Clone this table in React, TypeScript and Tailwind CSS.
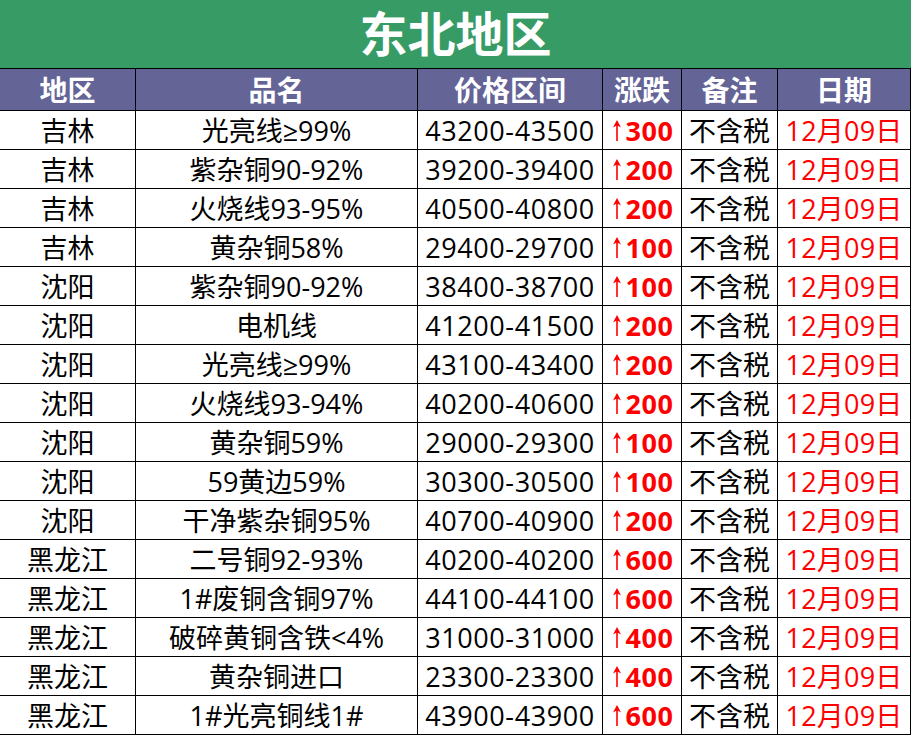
import React from 'react';

interface PriceRow {
  region: string;
  name: string;
  range: string;
  change: string;
}

const rows: PriceRow[] = [
  { region: '吉林', name: '光亮线≥99%', range: '43200-43500', change: '300' },
  { region: '吉林', name: '紫杂铜90-92%', range: '39200-39400', change: '200' },
  { region: '吉林', name: '火烧线93-95%', range: '40500-40800', change: '200' },
  { region: '吉林', name: '黄杂铜58%', range: '29400-29700', change: '100' },
  { region: '沈阳', name: '紫杂铜90-92%', range: '38400-38700', change: '100' },
  { region: '沈阳', name: '电机线', range: '41200-41500', change: '200' },
  { region: '沈阳', name: '光亮线≥99%', range: '43100-43400', change: '200' },
  { region: '沈阳', name: '火烧线93-94%', range: '40200-40600', change: '200' },
  { region: '沈阳', name: '黄杂铜59%', range: '29000-29300', change: '100' },
  { region: '沈阳', name: '59黄边59%', range: '30300-30500', change: '100' },
  { region: '沈阳', name: '干净紫杂铜95%', range: '40700-40900', change: '200' },
  { region: '黑龙江', name: '二号铜92-93%', range: '40200-40200', change: '600' },
  { region: '黑龙江', name: '1#废铜含铜97%', range: '44100-44100', change: '600' },
  { region: '黑龙江', name: '破碎黄铜含铁<4%', range: '31000-31000', change: '400' },
  { region: '黑龙江', name: '黄杂铜进口', range: '23300-23300', change: '400' },
  { region: '黑龙江', name: '1#光亮铜线1#', range: '43900-43900', change: '600' },
];

const headers = ['地区', '品名', '价格区间', '涨跌', '备注', '日期'];

// Latin glyphs from Open Sans (closest to the YaHei/Segoe look), CJK from Noto
const font = { fontFamily: '"Open Sans", "Noto Sans CJK SC", sans-serif' };

const cell = 'bg-white text-[27px] leading-none flex items-center justify-center whitespace-nowrap';

// thin up arrow, drawn since no installed font has the tall narrow one
const UpArrow = () => (
  <svg width="8" height="21" viewBox="0 0 8 21" className="mr-[5px] mt-[1px]" fill="#ff0000">
    <path d="M4 0 L8 7.5 L4.8 5.8 V21 H3.2 V5.8 L0 7.5 Z" />
  </svg>
);

export default function App() {
  return (
    <div className="w-[911px] h-[735px] bg-white overflow-hidden" style={font}>
      <div className="h-[68px] bg-[#379b66] flex items-center justify-center">
        <span className="text-white font-bold text-[48px] leading-none">东北地区</span>
      </div>
      <div className="grid grid-cols-[135px_281px_184px_78px_95px_132px] grid-rows-[41px] auto-rows-[38px] gap-px bg-black border-y border-r border-black w-[911px]">
        {headers.map((h) => (
          <div
            key={h}
            className="bg-[#646497] text-white font-bold text-[28px] leading-none flex items-center justify-center"
          >
            {h}
          </div>
        ))}
        {rows.map((r, i) => (
          <React.Fragment key={i}>
            <div className={`${cell} text-black`}>{r.region}</div>
            <div className={`${cell} text-black`}>{r.name}</div>
            <div className={`${cell} text-black tracking-[0.6px]`}>{r.range}</div>
            <div className={`${cell} text-[#ff0000] pl-[2px]`}>
              <UpArrow />
              <span className="font-bold text-[27px] tracking-[0.5px]">{r.change}</span>
            </div>
            <div className={`${cell} text-black`}>不含税</div>
            <div className={`${cell} text-[#ff0000] tracking-[0.2px]`}>12月09日</div>
          </React.Fragment>
        ))}
      </div>
    </div>
  );
}
